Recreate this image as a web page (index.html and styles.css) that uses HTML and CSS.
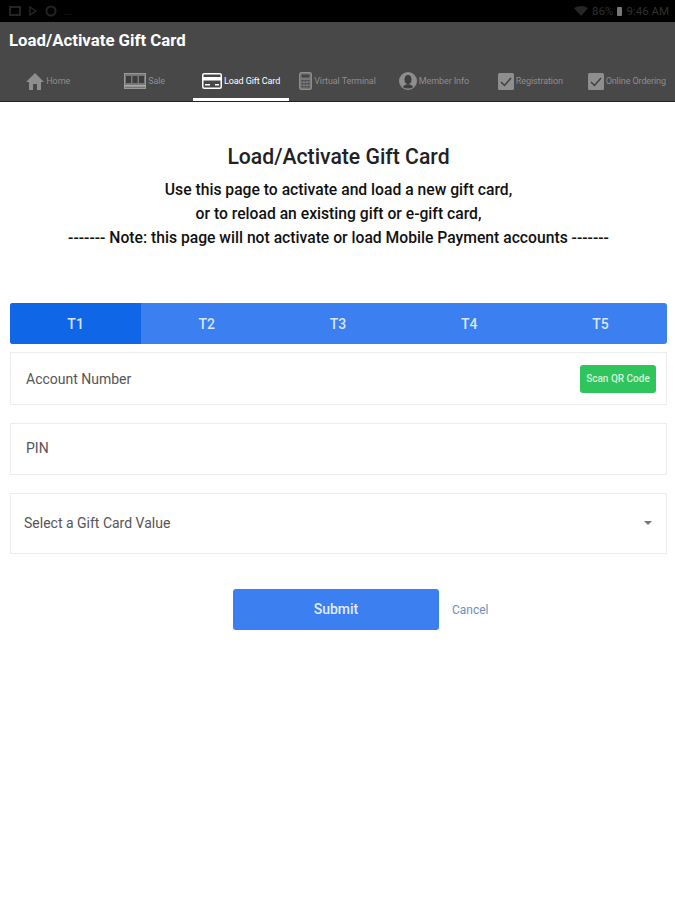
FILE: index.html
```html
<!DOCTYPE html>
<html lang="en">
<head>
    <meta charset="UTF-8">
    <meta name="viewport" content="width=device-width, initial-scale=1.0">
    <title>Load/Activate Gift Card</title>
    <link rel="stylesheet" href="styles.css">
</head>
<body>
    <div class="status-bar">
        <div class="status-icons">
            <svg width="12" height="10" viewBox="0 0 12 10"><rect x="1" y="1" width="10" height="8" fill="none" stroke="#242424" stroke-width="2"/></svg>
            <svg width="10" height="10" viewBox="0 0 10 10"><path d="M2 1 L8 5 L2 9 Z" fill="none" stroke="#242424" stroke-width="1.500"/></svg>
            <svg width="12" height="12" viewBox="0 0 12 12"><circle cx="6" cy="6" r="4.500" fill="none" stroke="#242424" stroke-width="2"/></svg>
            <span class="status-dots">...</span>
        </div>
        <div class="status-right">
            <svg width="14" height="10" viewBox="0 0 14 10"><path d="M0 2 Q7 -2 14 2 L7 10 Z" fill="#262626"/></svg>
            <span>86%</span>
            <svg class="battery" width="5" height="9" viewBox="0 0 5 9"><rect width="5" height="9" rx="1" fill="#777"/></svg>
            <span>9:46 AM</span>
        </div>
    </div>

    <header class="app-bar">
        <h1>Load/Activate Gift Card</h1>
        <nav class="nav-tabs">
            <a class="nav-tab">
                <svg width="18" height="17" viewBox="0 0 18 17"><path d="M9 0 L18 9 L15 9 L15 17 L11 17 L11 11 L7 11 L7 17 L3 17 L3 9 L0 9 Z" fill="#8e8e8e"/></svg>
                <span>Home</span>
            </a>
            <a class="nav-tab">
                <svg width="22" height="16" viewBox="0 0 22 16"><rect x="0.500" y="0.500" width="21" height="15" fill="#777" stroke="#999"/><rect x="2" y="3" width="5" height="7" fill="#3d3d3d"/><rect x="8.500" y="3" width="5" height="7" fill="#3d3d3d"/><rect x="15" y="3" width="5" height="7" fill="#3d3d3d"/><rect x="0" y="12" width="22" height="1.500" fill="#aaa"/></svg>
                <span>Sale</span>
            </a>
            <a class="nav-tab active">
                <svg width="20" height="16" viewBox="0 0 20 16"><rect x="0.750" y="0.750" width="18.500" height="14.500" rx="1.500" fill="#484848" stroke="#fff" stroke-width="1.500"/><rect x="1" y="4" width="18" height="3.500" fill="#fff"/><rect x="3" y="11" width="5" height="1.500" fill="#fff"/><rect x="13" y="11" width="4" height="1.500" fill="#fff"/></svg>
                <span>Load Gift Card</span>
            </a>
            <a class="nav-tab">
                <svg width="13" height="18" viewBox="0 0 13 18"><rect x="0.500" y="0.500" width="12" height="17" rx="1.500" fill="#777" stroke="#8e8e8e"/><rect x="2.500" y="2.500" width="8" height="3" fill="#454545"/><path d="M2.500 8h2v1.500h-2zM5.500 8h2v1.500h-2zM8.500 8h2v1.500h-2zM2.500 11h2v1.500h-2zM5.500 11h2v1.500h-2zM8.500 11h2v1.500h-2zM2.500 14h2v1.500h-2zM5.500 14h2v1.500h-2zM8.500 14h2v1.500h-2z" fill="#454545"/></svg>
                <span>Virtual Terminal</span>
            </a>
            <a class="nav-tab">
                <svg width="18" height="18" viewBox="0 0 18 18"><circle cx="9" cy="9" r="9" fill="#8e8e8e"/><ellipse cx="9" cy="7.500" rx="3.500" ry="4.500" fill="#3f3f3f"/><path d="M3.500 15 Q9 9 14.500 15 Q9 18 3.500 15 Z" fill="#3f3f3f"/></svg>
                <span>Member Info</span>
            </a>
            <a class="nav-tab">
                <svg width="16" height="17" viewBox="0 0 16 17"><rect width="16" height="17" rx="1.500" fill="#8e8e8e"/><path d="M3 9 L6.500 12.500 L13 5" fill="none" stroke="#3f3f3f" stroke-width="1.500"/></svg>
                <span>Registration</span>
            </a>
            <a class="nav-tab">
                <svg width="16" height="17" viewBox="0 0 16 17"><rect width="16" height="17" rx="1.500" fill="#8e8e8e"/><path d="M3 9 L6.500 12.500 L13 5" fill="none" stroke="#3f3f3f" stroke-width="1.500"/></svg>
                <span>Online Ordering</span>
            </a>
        </nav>
    </header>

    <main class="content">
        <div class="intro">
            <h2>Load/Activate Gift Card</h2>
            <p>Use this page to activate and load a new gift card,</p>
            <p>or to reload an existing gift or e-gift card,</p>
            <p>------- Note: this page will not activate or load Mobile Payment accounts -------</p>
        </div>

        <div class="terminals">
            <div class="terminal selected">T1</div>
            <div class="terminal">T2</div>
            <div class="terminal">T3</div>
            <div class="terminal">T4</div>
            <div class="terminal">T5</div>
        </div>

        <div class="field account-field">
            <span>Account Number</span>
            <button class="scan-button">Scan QR Code</button>
        </div>
        <div class="field pin-field">
            <span>PIN</span>
        </div>
        <div class="field select-field">
            <span>Select a Gift Card Value</span>
            <i class="caret"></i>
        </div>

        <div class="actions">
            <button class="submit-button">Submit</button>
            <a class="cancel-link">Cancel</a>
        </div>
    </main>
</body>
</html>
```

FILE: styles.css
```css
body {
    font-family: Roboto, "Liberation Sans", sans-serif;
    margin: 0;
    padding: 0;
    background: #fff;
    color: #111;
}

.status-bar {
    height: 22px;
    background: #000;
    display: flex;
    justify-content: space-between;
    align-items: center;
    padding: 0 6px 0 9px;
    box-sizing: border-box;
}

.status-icons {
    display: flex;
    align-items: center;
    gap: 7px;
}

.status-dots {
    font-size: 10px;
    color: #242424;
}

.status-right {
    display: flex;
    align-items: center;
    gap: 4px;
    font-size: 11.5px;
    color: #303030;
}

.app-bar {
    height: 80px;
    background: #484848;
    border-bottom: 1px solid #222;
    box-sizing: border-box;
}

.app-bar h1 {
    margin: 0;
    padding: 9px 0 0 9px;
    height: 43px;
    box-sizing: border-box;
    font-size: 16.8px;
    font-weight: 700;
    line-height: 18px;
    color: #fff;
}

.nav-tabs {
    display: grid;
    grid-template-columns: repeat(7, 1fr);
    height: 36px;
}

.nav-tab {
    display: flex;
    justify-content: center;
    align-items: center;
    gap: 2px;
    padding-bottom: 4px;
    box-sizing: border-box;
    font-size: 9px;
    color: #8e8e8e;
    white-space: nowrap;
    letter-spacing: -0.1px;
}

.nav-tab.active {
    color: #fff;
    border-bottom: 3px solid #fff;
    padding-bottom: 1px;
}

.content {
    padding: 0 8px 0 10px;
}

.intro {
    padding-top: 43px;
    height: 201px;
    box-sizing: border-box;
    text-align: center;
}

.intro h2 {
    margin: 0 0 9px;
    font-size: 21.2px;
    font-weight: 500;
    line-height: 24px;
    color: #222;
}

.intro p {
    margin: 0;
    font-size: 15.7px;
    font-weight: 500;
    line-height: 24px;
    color: #111;
}

.terminals {
    display: grid;
    grid-template-columns: repeat(5, 1fr);
    height: 41px;
    padding-right: 1px;
    background: #3b7ff0;
    border-radius: 3px;
    overflow: hidden;
}

.terminal {
    display: flex;
    justify-content: center;
    align-items: center;
    font-size: 14px;
    font-weight: 500;
    color: #d9e6fb;
}

.terminal.selected {
    background: #0f66e6;
}

.field {
    display: flex;
    justify-content: space-between;
    align-items: center;
    border: 1px solid #ececec;
    box-sizing: border-box;
    font-size: 14px;
    color: #555;
}

.account-field {
    height: 53px;
    margin-top: 8px;
    padding: 0 10px 0 15px;
}

.pin-field {
    height: 52px;
    margin-top: 18px;
    padding: 0 15px 2px;
}

.select-field {
    height: 61px;
    margin-top: 18px;
    padding: 0 14px 2px 13px;
}

.scan-button {
    width: 76px;
    height: 28px;
    padding: 0;
    border: none;
    border-radius: 3px;
    background: #2fc45c;
    color: #d5f3df;
    font-family: inherit;
    font-size: 10px;
    font-weight: 500;
}

.caret {
    width: 0;
    height: 0;
    border-left: 4px solid transparent;
    border-right: 4px solid transparent;
    border-top: 4px solid #777;
}

.actions {
    display: flex;
    align-items: center;
    margin-top: 35px;
    padding-left: 223px;
}

.submit-button {
    width: 206px;
    height: 41px;
    padding: 0 0 2px;
    border: none;
    border-radius: 3px;
    background: #3b7ff0;
    color: #e3edfc;
    font-family: inherit;
    font-size: 14px;
    font-weight: 500;
}

.cancel-link {
    margin-left: 13px;
    font-size: 12px;
    color: #6f8fb5;
}
```
